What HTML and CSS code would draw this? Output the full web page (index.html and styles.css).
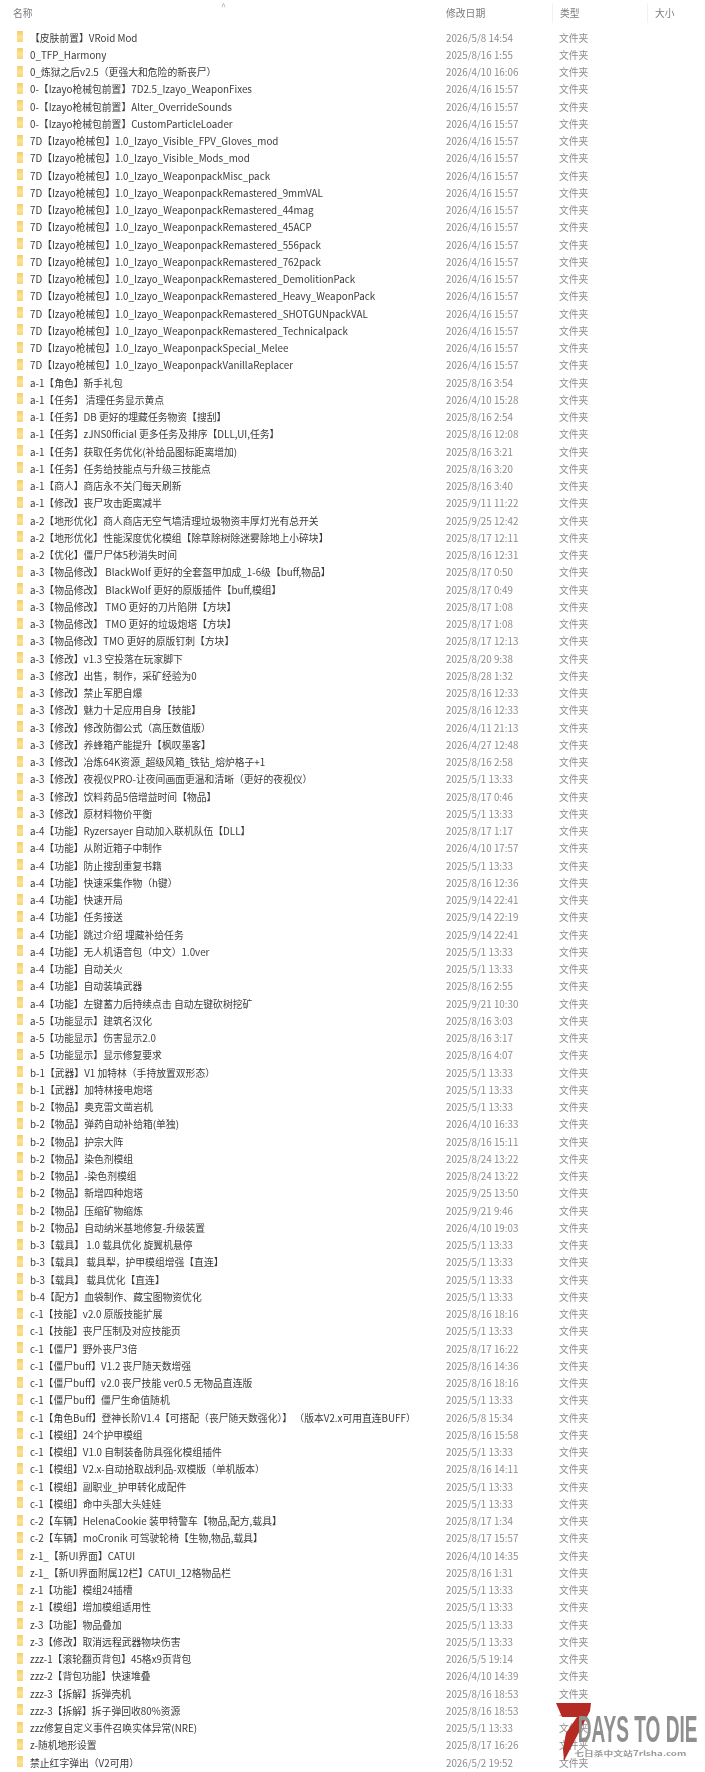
FILE: index.html
```html
<!DOCTYPE html>
<html lang="zh-CN">
<head>
  <meta charset="UTF-8" />
  <title>Mods</title>
  <link rel="stylesheet" href="styles.css">
</head>
<body>
  <div class="explorer">
    <div class="head">
      <span class="caret">^</span>
      <span class="col-name">名称</span>
      <span class="col-date">修改日期</span>
      <span class="col-type">类型</span>
      <span class="col-size">大小</span>
    </div>
    <div class="list">
      <div class="row"><i class="folder"></i><span class="name">【皮肤前置】VRoid Mod</span><span class="date">2026/5/8 14:54</span><span class="type">文件夹</span></div>
      <div class="row"><i class="folder"></i><span class="name">0_TFP_Harmony</span><span class="date">2025/8/16 1:55</span><span class="type">文件夹</span></div>
      <div class="row"><i class="folder"></i><span class="name">0_炼狱之后v2.5（更强大和危险的新丧尸）</span><span class="date">2026/4/10 16:06</span><span class="type">文件夹</span></div>
      <div class="row"><i class="folder"></i><span class="name">0-【Izayo枪械包前置】7D2.5_Izayo_WeaponFixes</span><span class="date">2026/4/16 15:57</span><span class="type">文件夹</span></div>
      <div class="row"><i class="folder"></i><span class="name">0-【Izayo枪械包前置】Alter_OverrideSounds</span><span class="date">2026/4/16 15:57</span><span class="type">文件夹</span></div>
      <div class="row"><i class="folder"></i><span class="name">0-【Izayo枪械包前置】CustomParticleLoader</span><span class="date">2026/4/16 15:57</span><span class="type">文件夹</span></div>
      <div class="row"><i class="folder"></i><span class="name">7D【Izayo枪械包】1.0_Izayo_Visible_FPV_Gloves_mod</span><span class="date">2026/4/16 15:57</span><span class="type">文件夹</span></div>
      <div class="row"><i class="folder"></i><span class="name">7D【Izayo枪械包】1.0_Izayo_Visible_Mods_mod</span><span class="date">2026/4/16 15:57</span><span class="type">文件夹</span></div>
      <div class="row"><i class="folder"></i><span class="name">7D【Izayo枪械包】1.0_Izayo_WeaponpackMisc_pack</span><span class="date">2026/4/16 15:57</span><span class="type">文件夹</span></div>
      <div class="row"><i class="folder"></i><span class="name">7D【Izayo枪械包】1.0_Izayo_WeaponpackRemastered_9mmVAL</span><span class="date">2026/4/16 15:57</span><span class="type">文件夹</span></div>
      <div class="row"><i class="folder"></i><span class="name">7D【Izayo枪械包】1.0_Izayo_WeaponpackRemastered_44mag</span><span class="date">2026/4/16 15:57</span><span class="type">文件夹</span></div>
      <div class="row"><i class="folder"></i><span class="name">7D【Izayo枪械包】1.0_Izayo_WeaponpackRemastered_45ACP</span><span class="date">2026/4/16 15:57</span><span class="type">文件夹</span></div>
      <div class="row"><i class="folder"></i><span class="name">7D【Izayo枪械包】1.0_Izayo_WeaponpackRemastered_556pack</span><span class="date">2026/4/16 15:57</span><span class="type">文件夹</span></div>
      <div class="row"><i class="folder"></i><span class="name">7D【Izayo枪械包】1.0_Izayo_WeaponpackRemastered_762pack</span><span class="date">2026/4/16 15:57</span><span class="type">文件夹</span></div>
      <div class="row"><i class="folder"></i><span class="name">7D【Izayo枪械包】1.0_Izayo_WeaponpackRemastered_DemolitionPack</span><span class="date">2026/4/16 15:57</span><span class="type">文件夹</span></div>
      <div class="row"><i class="folder"></i><span class="name">7D【Izayo枪械包】1.0_Izayo_WeaponpackRemastered_Heavy_WeaponPack</span><span class="date">2026/4/16 15:57</span><span class="type">文件夹</span></div>
      <div class="row"><i class="folder"></i><span class="name">7D【Izayo枪械包】1.0_Izayo_WeaponpackRemastered_SHOTGUNpackVAL</span><span class="date">2026/4/16 15:57</span><span class="type">文件夹</span></div>
      <div class="row"><i class="folder"></i><span class="name">7D【Izayo枪械包】1.0_Izayo_WeaponpackRemastered_Technicalpack</span><span class="date">2026/4/16 15:57</span><span class="type">文件夹</span></div>
      <div class="row"><i class="folder"></i><span class="name">7D【Izayo枪械包】1.0_Izayo_WeaponpackSpecial_Melee</span><span class="date">2026/4/16 15:57</span><span class="type">文件夹</span></div>
      <div class="row"><i class="folder"></i><span class="name">7D【Izayo枪械包】1.0_Izayo_WeaponpackVanillaReplacer</span><span class="date">2026/4/16 15:57</span><span class="type">文件夹</span></div>
      <div class="row"><i class="folder"></i><span class="name">a-1【角色】新手礼包</span><span class="date">2025/8/16 3:54</span><span class="type">文件夹</span></div>
      <div class="row"><i class="folder"></i><span class="name">a-1【任务】 清理任务显示黄点</span><span class="date">2026/4/10 15:28</span><span class="type">文件夹</span></div>
      <div class="row"><i class="folder"></i><span class="name">a-1【任务】DB 更好的埋藏任务物资【搜刮】</span><span class="date">2025/8/16 2:54</span><span class="type">文件夹</span></div>
      <div class="row"><i class="folder"></i><span class="name">a-1【任务】zJNS0fficial 更多任务及排序【DLL,UI,任务】</span><span class="date">2025/8/16 12:08</span><span class="type">文件夹</span></div>
      <div class="row"><i class="folder"></i><span class="name">a-1【任务】获取任务优化(补给品图标距离增加)</span><span class="date">2025/8/16 3:21</span><span class="type">文件夹</span></div>
      <div class="row"><i class="folder"></i><span class="name">a-1【任务】任务给技能点与升级三技能点</span><span class="date">2025/8/16 3:20</span><span class="type">文件夹</span></div>
      <div class="row"><i class="folder"></i><span class="name">a-1【商人】商店永不关门每天刷新</span><span class="date">2025/8/16 3:40</span><span class="type">文件夹</span></div>
      <div class="row"><i class="folder"></i><span class="name">a-1【修改】丧尸攻击距离减半</span><span class="date">2025/9/11 11:22</span><span class="type">文件夹</span></div>
      <div class="row"><i class="folder"></i><span class="name">a-2【地形优化】商人商店无空气墙清理垃圾物资丰厚灯光有总开关</span><span class="date">2025/9/25 12:42</span><span class="type">文件夹</span></div>
      <div class="row"><i class="folder"></i><span class="name">a-2【地形优化】性能深度优化模组【除草除树除迷雾除地上小碎块】</span><span class="date">2025/8/17 12:11</span><span class="type">文件夹</span></div>
      <div class="row"><i class="folder"></i><span class="name">a-2【优化】僵尸尸体5秒消失时间</span><span class="date">2025/8/16 12:31</span><span class="type">文件夹</span></div>
      <div class="row"><i class="folder"></i><span class="name">a-3【物品修改】 BlackWolf 更好的全套盔甲加成_1-6级【buff,物品】</span><span class="date">2025/8/17 0:50</span><span class="type">文件夹</span></div>
      <div class="row"><i class="folder"></i><span class="name">a-3【物品修改】 BlackWolf 更好的原版插件【buff,模组】</span><span class="date">2025/8/17 0:49</span><span class="type">文件夹</span></div>
      <div class="row"><i class="folder"></i><span class="name">a-3【物品修改】 TMO 更好的刀片陷阱【方块】</span><span class="date">2025/8/17 1:08</span><span class="type">文件夹</span></div>
      <div class="row"><i class="folder"></i><span class="name">a-3【物品修改】 TMO 更好的垃圾炮塔【方块】</span><span class="date">2025/8/17 1:08</span><span class="type">文件夹</span></div>
      <div class="row"><i class="folder"></i><span class="name">a-3【物品修改】TMO 更好的原版钉刺【方块】</span><span class="date">2025/8/17 12:13</span><span class="type">文件夹</span></div>
      <div class="row"><i class="folder"></i><span class="name">a-3【修改】v1.3 空投落在玩家脚下</span><span class="date">2025/8/20 9:38</span><span class="type">文件夹</span></div>
      <div class="row"><i class="folder"></i><span class="name">a-3【修改】出售，制作，采矿经验为0</span><span class="date">2025/8/28 1:32</span><span class="type">文件夹</span></div>
      <div class="row"><i class="folder"></i><span class="name">a-3【修改】禁止军肥自爆</span><span class="date">2025/8/16 12:33</span><span class="type">文件夹</span></div>
      <div class="row"><i class="folder"></i><span class="name">a-3【修改】魅力十足应用自身【技能】</span><span class="date">2025/8/16 12:33</span><span class="type">文件夹</span></div>
      <div class="row"><i class="folder"></i><span class="name">a-3【修改】修改防御公式（高压数值版）</span><span class="date">2026/4/11 21:13</span><span class="type">文件夹</span></div>
      <div class="row"><i class="folder"></i><span class="name">a-3【修改】养蜂箱产能提升【枫叹墨客】</span><span class="date">2026/4/27 12:48</span><span class="type">文件夹</span></div>
      <div class="row"><i class="folder"></i><span class="name">a-3【修改】冶炼64K资源_超级风箱_铁钻_熔炉格子+1</span><span class="date">2025/8/16 2:58</span><span class="type">文件夹</span></div>
      <div class="row"><i class="folder"></i><span class="name">a-3【修改】夜视仪PRO-让夜间画面更温和清晰（更好的夜视仪）</span><span class="date">2025/5/1 13:33</span><span class="type">文件夹</span></div>
      <div class="row"><i class="folder"></i><span class="name">a-3【修改】饮料药品5倍增益时间【物品】</span><span class="date">2025/8/17 0:46</span><span class="type">文件夹</span></div>
      <div class="row"><i class="folder"></i><span class="name">a-3【修改】原材料物价平衡</span><span class="date">2025/5/1 13:33</span><span class="type">文件夹</span></div>
      <div class="row"><i class="folder"></i><span class="name">a-4【功能】Ryzersayer 自动加入联机队伍【DLL】</span><span class="date">2025/8/17 1:17</span><span class="type">文件夹</span></div>
      <div class="row"><i class="folder"></i><span class="name">a-4【功能】从附近箱子中制作</span><span class="date">2026/4/10 17:57</span><span class="type">文件夹</span></div>
      <div class="row"><i class="folder"></i><span class="name">a-4【功能】防止搜刮重复书籍</span><span class="date">2025/5/1 13:33</span><span class="type">文件夹</span></div>
      <div class="row"><i class="folder"></i><span class="name">a-4【功能】快速采集作物（h键）</span><span class="date">2025/8/16 12:36</span><span class="type">文件夹</span></div>
      <div class="row"><i class="folder"></i><span class="name">a-4【功能】快速开局</span><span class="date">2025/9/14 22:41</span><span class="type">文件夹</span></div>
      <div class="row"><i class="folder"></i><span class="name">a-4【功能】任务接送</span><span class="date">2025/9/14 22:19</span><span class="type">文件夹</span></div>
      <div class="row"><i class="folder"></i><span class="name">a-4【功能】跳过介绍 埋藏补给任务</span><span class="date">2025/9/14 22:41</span><span class="type">文件夹</span></div>
      <div class="row"><i class="folder"></i><span class="name">a-4【功能】无人机语音包（中文）1.0ver</span><span class="date">2025/5/1 13:33</span><span class="type">文件夹</span></div>
      <div class="row"><i class="folder"></i><span class="name">a-4【功能】自动关火</span><span class="date">2025/5/1 13:33</span><span class="type">文件夹</span></div>
      <div class="row"><i class="folder"></i><span class="name">a-4【功能】自动装填武器</span><span class="date">2025/8/16 2:55</span><span class="type">文件夹</span></div>
      <div class="row"><i class="folder"></i><span class="name">a-4【功能】左键蓄力后持续点击 自动左键砍树挖矿</span><span class="date">2025/9/21 10:30</span><span class="type">文件夹</span></div>
      <div class="row"><i class="folder"></i><span class="name">a-5【功能显示】建筑名汉化</span><span class="date">2025/8/16 3:03</span><span class="type">文件夹</span></div>
      <div class="row"><i class="folder"></i><span class="name">a-5【功能显示】伤害显示2.0</span><span class="date">2025/8/16 3:17</span><span class="type">文件夹</span></div>
      <div class="row"><i class="folder"></i><span class="name">a-5【功能显示】显示修复要求</span><span class="date">2025/8/16 4:07</span><span class="type">文件夹</span></div>
      <div class="row"><i class="folder"></i><span class="name">b-1【武器】V1 加特林（手持放置双形态）</span><span class="date">2025/5/1 13:33</span><span class="type">文件夹</span></div>
      <div class="row"><i class="folder"></i><span class="name">b-1【武器】加特林接电炮塔</span><span class="date">2025/5/1 13:33</span><span class="type">文件夹</span></div>
      <div class="row"><i class="folder"></i><span class="name">b-2【物品】奥克雷文凿岩机</span><span class="date">2025/5/1 13:33</span><span class="type">文件夹</span></div>
      <div class="row"><i class="folder"></i><span class="name">b-2【物品】弹药自动补给箱(单独)</span><span class="date">2026/4/10 16:33</span><span class="type">文件夹</span></div>
      <div class="row"><i class="folder"></i><span class="name">b-2【物品】护宗大阵</span><span class="date">2025/8/16 15:11</span><span class="type">文件夹</span></div>
      <div class="row"><i class="folder"></i><span class="name">b-2【物品】染色剂模组</span><span class="date">2025/8/24 13:22</span><span class="type">文件夹</span></div>
      <div class="row"><i class="folder"></i><span class="name">b-2【物品】-染色剂模组</span><span class="date">2025/8/24 13:22</span><span class="type">文件夹</span></div>
      <div class="row"><i class="folder"></i><span class="name">b-2【物品】新增四种炮塔</span><span class="date">2025/9/25 13:50</span><span class="type">文件夹</span></div>
      <div class="row"><i class="folder"></i><span class="name">b-2【物品】压缩矿物缩炼</span><span class="date">2025/9/21 9:46</span><span class="type">文件夹</span></div>
      <div class="row"><i class="folder"></i><span class="name">b-2【物品】自动纳米基地修复-升级装置</span><span class="date">2026/4/10 19:03</span><span class="type">文件夹</span></div>
      <div class="row"><i class="folder"></i><span class="name">b-3【载具】 1.0 载具优化 旋翼机悬停</span><span class="date">2025/5/1 13:33</span><span class="type">文件夹</span></div>
      <div class="row"><i class="folder"></i><span class="name">b-3【载具】 载具犁，护甲模组增强【直连】</span><span class="date">2025/5/1 13:33</span><span class="type">文件夹</span></div>
      <div class="row"><i class="folder"></i><span class="name">b-3【载具】 载具优化【直连】</span><span class="date">2025/5/1 13:33</span><span class="type">文件夹</span></div>
      <div class="row"><i class="folder"></i><span class="name">b-4【配方】血袋制作、藏宝图物资优化</span><span class="date">2025/5/1 13:33</span><span class="type">文件夹</span></div>
      <div class="row"><i class="folder"></i><span class="name">c-1【技能】v2.0 原版技能扩展</span><span class="date">2025/8/16 18:16</span><span class="type">文件夹</span></div>
      <div class="row"><i class="folder"></i><span class="name">c-1【技能】丧尸压制及对应技能页</span><span class="date">2025/5/1 13:33</span><span class="type">文件夹</span></div>
      <div class="row"><i class="folder"></i><span class="name">c-1【僵尸】野外丧尸3倍</span><span class="date">2025/8/17 16:22</span><span class="type">文件夹</span></div>
      <div class="row"><i class="folder"></i><span class="name">c-1【僵尸buff】V1.2 丧尸随天数增强</span><span class="date">2025/8/16 14:36</span><span class="type">文件夹</span></div>
      <div class="row"><i class="folder"></i><span class="name">c-1【僵尸buff】v2.0 丧尸技能 ver0.5 无物品直连版</span><span class="date">2025/8/16 18:16</span><span class="type">文件夹</span></div>
      <div class="row"><i class="folder"></i><span class="name">c-1【僵尸buff】僵尸生命值随机</span><span class="date">2025/5/1 13:33</span><span class="type">文件夹</span></div>
      <div class="row"><i class="folder"></i><span class="name">c-1【角色Buff】登神长阶V1.4【可搭配（丧尸随天数强化）】 （版本V2.x可用直连BUFF）</span><span class="date">2026/5/8 15:34</span><span class="type">文件夹</span></div>
      <div class="row"><i class="folder"></i><span class="name">c-1【模组】24个护甲模组</span><span class="date">2025/8/16 15:58</span><span class="type">文件夹</span></div>
      <div class="row"><i class="folder"></i><span class="name">c-1【模组】V1.0 自制装备防具强化模组插件</span><span class="date">2025/5/1 13:33</span><span class="type">文件夹</span></div>
      <div class="row"><i class="folder"></i><span class="name">c-1【模组】V2.x-自动拾取战利品-双模版（单机版本）</span><span class="date">2025/8/16 14:11</span><span class="type">文件夹</span></div>
      <div class="row"><i class="folder"></i><span class="name">c-1【模组】副职业_护甲转化成配件</span><span class="date">2025/5/1 13:33</span><span class="type">文件夹</span></div>
      <div class="row"><i class="folder"></i><span class="name">c-1【模组】命中头部大头娃娃</span><span class="date">2025/5/1 13:33</span><span class="type">文件夹</span></div>
      <div class="row"><i class="folder"></i><span class="name">c-2【车辆】HelenaCookie 装甲特警车【物品,配方,载具】</span><span class="date">2025/8/17 1:34</span><span class="type">文件夹</span></div>
      <div class="row"><i class="folder"></i><span class="name">c-2【车辆】moCronik 可驾驶轮椅【生物,物品,载具】</span><span class="date">2025/8/17 15:57</span><span class="type">文件夹</span></div>
      <div class="row"><i class="folder"></i><span class="name">z-1_【新UI界面】CATUI</span><span class="date">2026/4/10 14:35</span><span class="type">文件夹</span></div>
      <div class="row"><i class="folder"></i><span class="name">z-1_【新UI界面附属12栏】CATUI_12格物品栏</span><span class="date">2025/8/16 1:31</span><span class="type">文件夹</span></div>
      <div class="row"><i class="folder"></i><span class="name">z-1【功能】模组24插槽</span><span class="date">2025/5/1 13:33</span><span class="type">文件夹</span></div>
      <div class="row"><i class="folder"></i><span class="name">z-1【模组】增加模组适用性</span><span class="date">2025/5/1 13:33</span><span class="type">文件夹</span></div>
      <div class="row"><i class="folder"></i><span class="name">z-3【功能】物品叠加</span><span class="date">2025/5/1 13:33</span><span class="type">文件夹</span></div>
      <div class="row"><i class="folder"></i><span class="name">z-3【修改】取消远程武器物块伤害</span><span class="date">2025/5/1 13:33</span><span class="type">文件夹</span></div>
      <div class="row"><i class="folder"></i><span class="name">zzz-1【滚轮翻页背包】45格x9页背包</span><span class="date">2026/5/5 19:14</span><span class="type">文件夹</span></div>
      <div class="row"><i class="folder"></i><span class="name">zzz-2【背包功能】快速堆叠</span><span class="date">2026/4/10 14:39</span><span class="type">文件夹</span></div>
      <div class="row"><i class="folder"></i><span class="name">zzz-3【拆解】拆弹壳机</span><span class="date">2025/8/16 18:53</span><span class="type">文件夹</span></div>
      <div class="row"><i class="folder"></i><span class="name">zzz-3【拆解】拆子弹回收80%资源</span><span class="date">2025/8/16 18:53</span><span class="type">文件夹</span></div>
      <div class="row"><i class="folder"></i><span class="name">zzz修复自定义事件召唤实体异常(NRE)</span><span class="date">2025/5/1 13:33</span><span class="type">文件夹</span></div>
      <div class="row"><i class="folder"></i><span class="name">z-随机地形设置</span><span class="date">2025/8/17 16:26</span><span class="type">文件夹</span></div>
      <div class="row"><i class="folder"></i><span class="name">禁止红字弹出（V2可用）</span><span class="date">2026/5/2 19:52</span><span class="type">文件夹</span></div>
    </div>
    <svg class="watermark" viewBox="0 0 142 62" width="142" height="62">
      <polygon class="seven" points="0,0 35,0 34,8 8,58 7,46 10,30 21,14 6,14" />
      <g transform="scale(0.53,1)">
        <text class="wm-title" x="41" y="39">DAYS TO DIE</text>
      </g>
      <g transform="scale(1.4,1)">
        <text class="wm-site" x="13" y="53">七日杀中文站7rlsha.com</text>
      </g>
    </svg>
  </div>
</body>
</html>
```

FILE: styles.css
```css
* {
  box-sizing: border-box;
  margin: 0;
  padding: 0;
}
body {
  background: #fff;
  font-family: "Noto Sans CJK SC", "Noto Sans", sans-serif;
  font-size: 9.8px;
  color: #3a3a3a;
  width: 705px;
  height: 1772px;
  overflow: hidden;
}
.explorer {
  position: relative;
  height: 1772px;
  padding-top: 29px;
}
.explorer > .head, .list {
  filter: blur(0.35px);
}
.head {
  position: absolute;
  top: 0;
  left: 0;
  width: 705px;
  height: 20px;
  color: #7c7c7c;
}
.head span {
  position: absolute;
  top: 3px;
  line-height: 20px;
}
.caret {
  left: 221px;
  top: -3px !important;
  font-size: 9px;
  color: #aaa;
}
.col-name { left: 13px; }
.col-date { left: 446px; }
.col-type {
  left: 552px;
  padding-left: 7px;
  border-left: 1px solid #f1f1f1;
}
.col-size {
  left: 647px;
  padding-left: 7px;
  border-left: 1px solid #f1f1f1;
}
.list {
  display: grid;
  grid-auto-rows: 17.26px;
}
.row {
  display: flex;
  align-items: center;
  padding-left: 17px;
  white-space: nowrap;
}
.folder {
  width: 6px;
  height: 11px;
  margin-right: 7px;
  margin-top: -2px;
  border-radius: 1px 0 0 1px;
  background: linear-gradient(180deg, #f5cd68 0%, #fbe295 55%, #f8d676 100%);
}
.name {
  width: 416px;
  flex: none;
}
.date {
  width: 113px;
  flex: none;
  color: #8c8c8c;
}
.type {
  color: #8c8c8c;
}
.watermark {
  position: absolute;
  left: 556px;
  top: 1703px;
  filter: blur(0.4px);
}
.seven {
  fill: #b52a22;
}
.wm-title {
  font-family: "Liberation Sans", sans-serif;
  font-weight: bold;
  font-size: 36px;
  fill: #8f8f8f;
}
.wm-site {
  font-size: 7px;
  font-weight: bold;
  fill: #9a9a9a;
}
```
